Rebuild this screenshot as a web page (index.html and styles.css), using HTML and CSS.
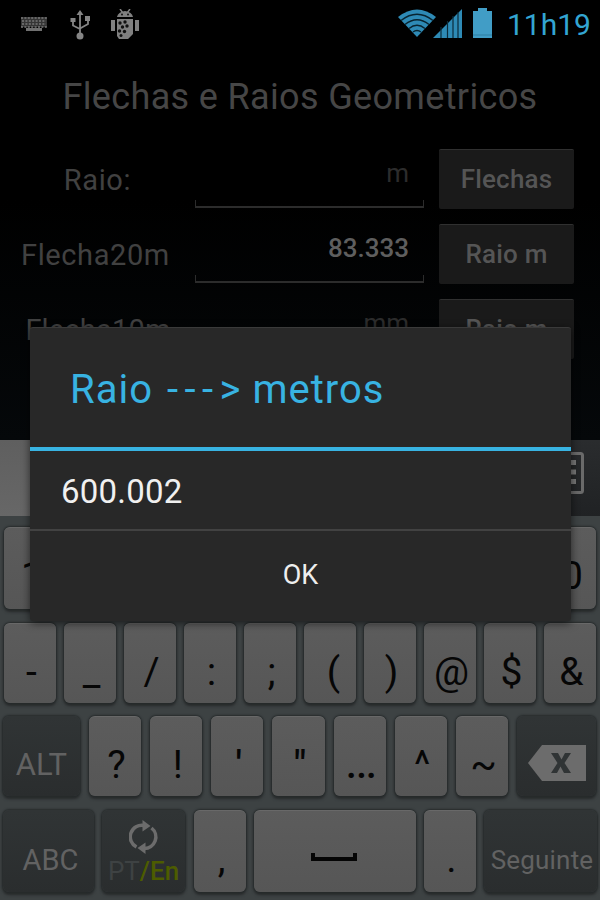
FILE: index.html
```html
<!DOCTYPE html>
<html lang="pt">
<head>
    <meta charset="UTF-8">
    <meta name="viewport" content="width=device-width, initial-scale=1.0">
    <title>Flechas e Raios Geometricos</title>
    <link rel="stylesheet" href="styles.css">
</head>
<body>
    <div class="screen">
        <header class="status-bar">
            <div class="notifications">
                <svg class="icon-keyboard" width="28" height="16" viewBox="0 0 28 16">
                    <path d="M1 1h26v10H1z" fill="#353535"/>
                    <path d="M1 2h26M2 5h24M2 8h24M1 11h26" stroke="#777" stroke-width="1.6" stroke-dasharray="2 1.4"/>
                    <path d="M6 12h16v3H6z" fill="#707070"/>
                </svg>
                <svg class="icon-usb" width="22" height="32" viewBox="0 0 22 32">
                    <g fill="none" stroke="#858585" stroke-width="1.8">
                        <path d="M11 5v22M11 20l-7-3.500v-6M11 19.500l8-4.500V9"/>
                    </g>
                    <path d="M11 1l3.500 5h-7zM1.500 9h5v4h-5zM16 7h5v5h-5z" fill="#858585"/>
                    <circle cx="11" cy="27" r="3.500" fill="#858585"/>
                </svg>
                <svg class="icon-debug" width="30" height="32" viewBox="0 0 30 32">
                    <g fill="#808080">
                        <path d="M7 8q1-5 8-6 7 1 8 6zM1 11h4v11H1zM25 11h4v11h-4zM7 10h16v15l-5 5H9l-2-3z"/>
                        <path d="M10 0l3 4M20 0l-3 4" stroke="#808080" stroke-width="1.500"/>
                    </g>
                    <g fill="#111">
                        <circle cx="12" cy="5.500" r="1"/><circle cx="18" cy="5.500" r="1"/>
                        <circle cx="10" cy="14" r="1.700"/><circle cx="15" cy="13" r="1.700"/>
                        <circle cx="12.500" cy="18" r="1.700"/><circle cx="17" cy="17" r="1.700"/>
                        <circle cx="9.500" cy="22" r="1.700"/><circle cx="14.500" cy="22.500" r="1.700"/>
                        <circle cx="11" cy="26.500" r="1.500"/>
                    </g>
                </svg>
            </div>
            <div class="system">
                <svg class="icon-wifi" width="38" height="28" viewBox="0 0 38 28">
                    <path d="M0 8Q19-7 38 8L19 28z" fill="#2e8ab5"/>
                    <path d="M3 11.500Q19-1 35 11.500M7 15.500Q19 6 31 15.500M11 19.500Q19 13 27 19.500M15 23q4-3 8 0" fill="none" stroke="#082430" stroke-width="1.500"/>
                </svg>
                <svg class="icon-signal" width="30" height="29" viewBox="0 0 30 29">
                    <path d="M0 29L29 0v29z" fill="#2e8ab5"/>
                    <path d="M8 18v11M14.500 12v17M20 7v22M25 3v26" stroke="#0b2c3b" stroke-width="1.200"/>
                </svg>
                <svg class="icon-battery" width="19" height="30" viewBox="0 0 19 30">
                    <path d="M0 3h5V0h9v3h5v27H0z" fill="#419dc6"/>
                    <path d="M0 27h19" stroke="#2e7fa3"/>
                </svg>
                <span class="clock">11h19</span>
            </div>
        </header>

        <main class="app">
            <h1 class="app-title">Flechas e Raios Geometricos</h1>
            <div class="row">
                <label class="label">Raio:</label>
                <div class="field hint">m</div>
                <div class="btn">Flechas</div>
            </div>
            <div class="row">
                <label class="label label-20">Flecha20m</label>
                <div class="field value">83.333</div>
                <div class="btn">Raio m</div>
            </div>
            <div class="row">
                <label class="label label-10">Flecha10m</label>
                <div class="field hint">mm</div>
                <div class="btn">Raio m</div>
            </div>
        </main>

        <section class="keyboard">
            <div class="suggestions">
                <div class="candidate"></div>
                <div class="tools">
                    <svg width="34" height="42" viewBox="0 0 34 42">
                        <rect x="1.500" y="1.500" width="31" height="39" rx="2" fill="none" stroke="#6a6a6a" stroke-width="3"/>
                        <path d="M8 8h18v27H8z" fill="#242627"/>
                        <path d="M8 10.500h18M8 20h18M8 29.500h18" stroke="#777" stroke-width="5" stroke-dasharray="5 1.500"/>
                    </svg>
                </div>
            </div>
            <div class="keys keys-numbers">
                <div class="key">1</div>
                <div class="key">2</div>
                <div class="key">3</div>
                <div class="key">4</div>
                <div class="key">5</div>
                <div class="key">6</div>
                <div class="key">7</div>
                <div class="key">8</div>
                <div class="key">9</div>
                <div class="key">0</div>
            </div>
            <div class="keys keys-symbols">
                <div class="key">-</div>
                <div class="key">_</div>
                <div class="key">/</div>
                <div class="key">:</div>
                <div class="key">;</div>
                <div class="key key-paren">(</div>
                <div class="key">)</div>
                <div class="key">@</div>
                <div class="key">$</div>
                <div class="key">&amp;</div>
            </div>
            <div class="keys keys-punctuation">
                <div class="key dark key-alt">ALT</div>
                <div class="key">?</div>
                <div class="key">!</div>
                <div class="key key-quote">'</div>
                <div class="key key-quote">"</div>
                <div class="key key-ellipsis">…</div>
                <div class="key">^</div>
                <div class="key">~</div>
                <div class="key dark key-delete">
                    <svg width="58" height="36" viewBox="0 0 58 36">
                        <path d="M0 18L14 0h44v36H14z" fill="#6c6c6c"/>
                        <path d="M23 8h7l3.500 6.500L37 8h6l-6.500 10L43 28h-7l-3.500-6.500L29 28h-6l6.500-10z" fill="#303435"/>
                    </svg>
                </div>
            </div>
            <div class="keys keys-bottom">
                <div class="key dark key-abc">ABC</div>
                <div class="key dark key-lang">
                    <svg width="30" height="34" viewBox="0 0 30 34">
                        <g fill="none" stroke="#6c6c6c" stroke-width="3.500">
                            <path d="M7.500 27A11.500 11.500 0 0 1 15 5.500"/>
                            <path d="M22.500 8A11.500 11.500 0 0 1 15 28.500"/>
                        </g>
                        <path d="M13.500 0l8 6-8 5.500zM16.500 34l-8-6 8-5.500z" fill="#6c6c6c"/>
                    </svg>
                    <div class="lang">PT<span class="lang-active">/En</span></div>
                </div>
                <div class="key key-comma">,</div>
                <div class="key key-space">
                    <svg width="46" height="8" viewBox="0 0 46 8">
                        <path d="M2 0v6h42V0" fill="none" stroke="#050505" stroke-width="4"/>
                    </svg>
                </div>
                <div class="key key-dot">.</div>
                <div class="key dark key-next">Seguinte</div>
            </div>
        </section>

        <div class="dialog">
            <h2 class="dialog-title">Raio <span class="arrow">---</span>&gt; metros</h2>
            <div class="dialog-message">600.002</div>
            <div class="dialog-button">OK</div>
        </div>
    </div>
</body>
</html>
```
FILE: styles.css
```css
* {
    box-sizing: border-box;
}

body {
    margin: 0;
    background: #000;
    font-family: Roboto, "Liberation Sans", sans-serif;
}

svg {
    display: block;
    flex-shrink: 0;
}

.screen {
    position: relative;
    width: 600px;
    height: 900px;
    overflow: hidden;
    background: linear-gradient(#000 0, #000 200px, #05080a 440px);
}

/* Status bar */
.status-bar {
    display: flex;
    justify-content: space-between;
    height: 50px;
    padding: 8px 11px 0 20px;
}

.notifications,
.system {
    display: flex;
    align-items: flex-start;
}

.icon-keyboard {
    margin-top: 8px;
}

.icon-usb {
    margin: 1px 0 0 21px;
}

.icon-debug {
    margin: 1px 0 0 19px;
}

.icon-wifi {
    margin-top: 1px;
}

.icon-signal {
    margin: 1px 0 0 -3px;
}

.icon-battery {
    margin-left: 10px;
}

.clock {
    width: 82px;
    margin-left: 15px;
    color: #33a5d2;
    font-size: 30px;
    line-height: 33px;
    letter-spacing: 0;
    white-space: nowrap;
}

/* Form */
.app-title {
    height: 92px;
    margin: 0;
    color: #464646;
    font-size: 36px;
    font-weight: 400;
    line-height: 94px;
    letter-spacing: 0.35px;
    text-align: center;
    white-space: nowrap;
}

.row {
    display: flex;
    height: 75px;
}

.label {
    width: 195px;
    color: #414141;
    font-size: 29px;
    line-height: 76px;
    letter-spacing: 0.6px;
    text-align: center;
}

.label-20 {
    padding-right: 4px;
}

.label-10 {
    padding-left: 1px;
    letter-spacing: 0.2px;
}

.field {
    width: 229px;
    height: 66px;
    padding-right: 15px;
    font-size: 26px;
    line-height: 63px;
    text-align: right;
    background:
        linear-gradient(#2c2c2c, #2c2c2c) left bottom / 1px 8px no-repeat,
        linear-gradient(#2c2c2c, #2c2c2c) right bottom / 1px 8px no-repeat,
        linear-gradient(#2c2c2c, #2c2c2c) left bottom / 100% 2px no-repeat;
}

.hint {
    color: #2c2c2c;
}

.value {
    color: #5e5e5e;
    font-weight: 500;
}

.btn {
    width: 135px;
    height: 60px;
    margin: 7px 0 0 15px;
    border-top: 1px solid #303030;
    border-radius: 2px;
    background: #1a1a1a;
    color: #555;
    font-size: 26px;
    font-weight: 500;
    line-height: 58px;
    letter-spacing: 0.2px;
    text-align: center;
}

/* Keyboard */
.keyboard {
    position: absolute;
    top: 440px;
    left: 0;
    width: 600px;
    height: 460px;
    background: #3d4243;
}

.suggestions {
    display: flex;
    height: 76px;
    background: linear-gradient(#2a2c2e, #202224);
}

.candidate {
    width: 500px;
    background: linear-gradient(#5f5f5f, #676767);
}

.tools {
    padding: 12px 0 0 50px;
}

.keys {
    display: flex;
    padding: 0 4px;
}

.keys-numbers {
    gap: 8px;
    margin-top: 11px;
}

.keys-symbols {
    gap: 8px;
    margin-top: 14px;
}

.keys-punctuation {
    gap: 9px;
    margin-top: 13px;
    padding-left: 3px;
}

.keys-bottom {
    gap: 8px;
    margin-top: 14px;
    padding: 0 3px;
}

.key {
    flex: 1 1 0;
    height: 80px;
    padding-top: 16px;
    border-top: 1px solid #686868;
    border-radius: 6px;
    background: linear-gradient(#5c5c5c, #565656);
    box-shadow: 0 0 2px 1px #262a2b, 0 3px 3px #272a2b;
    color: #060606;
    font-size: 39px;
    line-height: 64px;
    text-align: center;
    text-indent: 3px;
    white-space: nowrap;
}

.keys-numbers .key,
.keys-bottom .key {
    height: 82px;
}

.keys-numbers .key {
    text-indent: 4px;
}

.keys-symbols .key-paren {
    text-indent: 7px;
}

.key-quote {
    font-weight: 500;
}

.key-ellipsis {
    font-size: 48px;
    line-height: 58px;
}

.dark {
    border-top-color: #303435;
    background: linear-gradient(#303435, #2a2d2e);
    color: #626262;
    text-indent: 0;
}

.key-alt {
    flex: 0 0 77px;
    font-size: 31px;
}

.key-delete {
    flex: 0 0 79px;
    padding: 28px 0 0 11px;
}

.key-abc {
    flex: 0 0 91px;
    padding-left: 4px;
    font-size: 29px;
    line-height: 66px;
}

.key-lang {
    flex: 0 0 83px;
    padding: 9px 0 0;
}

.key-lang svg {
    margin: 0 auto;
}

.lang {
    color: #3e4243;
    font-size: 26px;
    line-height: 34px;
}

.lang-active {
    color: #4d5c00;
    font-weight: 500;
}

.key-comma,
.key-dot {
    flex: 0 0 52px;
}

.key-comma {
    margin-left: 1px;
}

.key-space {
    padding: 42px 0 0 57px;
}

.key-next {
    flex: 0 0 113px;
    padding-left: 3px;
    font-size: 26px;
    line-height: 66px;
    letter-spacing: 0.2px;
}

/* Dialog */
.dialog {
    position: absolute;
    top: 327px;
    left: 30px;
    width: 541px;
    height: 294px;
    border-top: 1px solid #3a3a3a;
    border-radius: 3px;
    background: #282828;
    box-shadow: 0 2px 9px rgba(0, 0, 0, 0.6);
}

.dialog-title {
    height: 123px;
    margin: 0;
    padding-left: 40px;
    border-bottom: 4px solid #38b3e2;
    color: #38b3e2;
    font-size: 40px;
    font-weight: 400;
    line-height: 124px;
    letter-spacing: 1px;
    white-space: nowrap;
}

.arrow {
    margin-left: 3px;
    letter-spacing: 6.5px;
}

.dialog-message {
    height: 80px;
    padding-left: 31px;
    border-bottom: 2px solid #424242;
    color: #f0f0f0;
    font-size: 33px;
    line-height: 81px;
    letter-spacing: 0.2px;
}

.dialog-button {
    color: #eee;
    font-size: 27px;
    line-height: 88px;
    text-align: center;
}
```
